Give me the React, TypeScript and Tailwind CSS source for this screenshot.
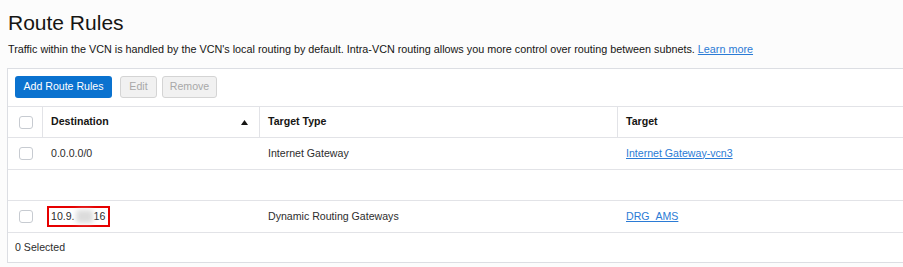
import React from "react";

function Checkbox() {
  return <div className="h-[13px] w-[14px] rounded-[3px] border border-[#c7cbd1] bg-white" />;
}

export default function App() {
  return (
    <div className="h-[267px] w-[903px] overflow-hidden bg-[#fcfcfc] font-['Liberation_Sans',Arial,sans-serif] text-[#161513]">
      <div className="px-[8px] pt-[10px]">
        <h1 className="text-[21px] leading-[26px] font-normal">Route Rules</h1>
        <p className="mt-[5px] text-[10.8px] leading-[16px] text-[#161513]">
          Traffic within the VCN is handled by the VCN's local routing by default. Intra-VCN routing allows you more control over routing between subnets.{" "}
          <a className="text-[#2b7bd5] underline">Learn more</a>
        </p>
      </div>
      <div className="ml-[7px] mt-[11px] w-[910px] border border-[#dcdee3] bg-white text-[10.6px]">
        <div className="flex h-[37px] items-start pl-[7px] pt-[7px]">
          <button className="h-[22px] w-[97px] rounded-[3px] bg-[#0a72cf] text-white">Add Route Rules</button>
          <button className="ml-[8px] h-[22px] w-[37px] rounded-[3px] border border-[#d4d4d4] bg-[#f1f1f1] text-[#a8a8a8]">Edit</button>
          <button className="ml-[5px] h-[22px] w-[55px] rounded-[3px] border border-[#d4d4d4] bg-[#f1f1f1] text-[#a8a8a8]">Remove</button>
        </div>
        <div className="flex h-[31px] border-t border-[#e2e3e7] font-bold">
          <div className="flex w-[35px] items-center border-r border-[#e2e3e7] pl-[11px]">
            <Checkbox />
          </div>
          <div className="flex w-[217px] items-center justify-between border-r border-[#e2e3e7] pl-[8px] pr-[11px]">
            <span>Destination</span>
            <svg width="7" height="5" viewBox="0 0 7 5">
              <path d="M0 5 L3.5 0 L7 5 Z" fill="#161513" />
            </svg>
          </div>
          <div className="flex w-[358px] items-center border-r border-[#e2e3e7] pl-[8px]">Target Type</div>
          <div className="flex flex-1 items-center pl-[8px]">Target</div>
        </div>
        <div className="flex h-[32px] items-center border-t border-[#e2e3e7] text-[#2d2d2d]">
          <div className="flex w-[35px] pl-[11px]">
            <Checkbox />
          </div>
          <div className="w-[217px] pl-[8px]">0.0.0.0/0</div>
          <div className="w-[358px] pl-[8px]">Internet Gateway</div>
          <div className="flex-1 pl-[8px]">
            <a className="text-[#2b7bd5] underline">Internet Gateway-vcn3</a>
          </div>
        </div>
        <div className="h-[31px] border-t border-[#e2e3e7]" />
        <div className="flex h-[32px] items-center border-t border-[#e2e3e7] text-[#2d2d2d]">
          <div className="flex w-[35px] pl-[11px]">
            <Checkbox />
          </div>
          <div className="w-[217px] pl-[4px]">
            <span className="inline-flex h-[21px] items-center border-2 border-[#e60000] pl-[2px] pr-[3px]">
              <span>10.9.</span>
              <span className="mx-[1px] h-[13px] w-[17px] rounded-[3px] bg-[#dcdcdc] blur-[2.5px]" />
              <span>16</span>
            </span>
          </div>
          <div className="w-[358px] pl-[8px]">Dynamic Routing Gateways</div>
          <div className="flex-1 pl-[8px]">
            <a className="text-[#2b7bd5] underline">DRG_AMS</a>
          </div>
        </div>
        <div className="flex h-[30px] items-center border-t border-[#e2e3e7] pl-[7px] text-[#2d2d2d]">0 Selected</div>
      </div>
    </div>
  );
}
